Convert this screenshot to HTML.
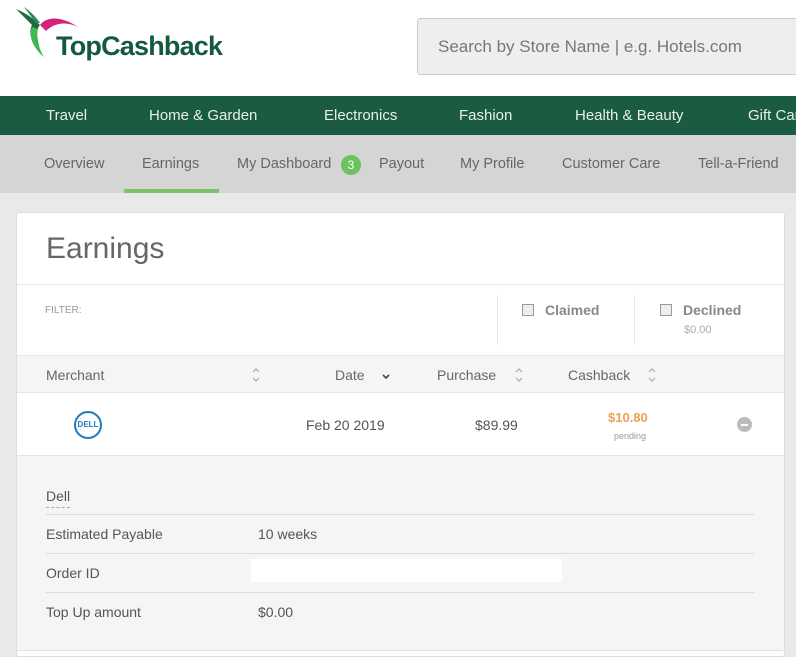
<!DOCTYPE html>
<html><head><meta charset="utf-8"><style>
*{margin:0;padding:0;box-sizing:border-box}
body{width:796px;height:655px;overflow:hidden;background:#e9e9e9;font-family:"Liberation Sans",sans-serif;color:#555;position:relative}
.a{position:absolute;white-space:nowrap}
</style></head><body>
<div class="a" style="left:0;top:0;width:796px;height:96px;background:#fff"></div>
<svg class="a" style="left:14px;top:3px" width="70" height="60" viewBox="0 0 70 60">
<path d="M2 6 C12 10 20 16 26 22 C22 26 22 36 28 52 C18 42 14 30 18 22 Z" fill="#1e6b47"/>
<path d="M18 24 C14 34 20 46 30 54 C22 40 22 32 24 26 Z" fill="#3dbb4e"/>
<path d="M26 22 C32 14 46 12 64 24 C52 18 40 20 32 28 Z" fill="#d6227a"/>
<path d="M10 4 C16 8 22 14 26 20 L22 20 Z" fill="#2a8a55"/>
</svg>
<div class="a" style="left:56px;top:31px;font-size:27px;font-weight:bold;color:#155a3c;letter-spacing:-0.8px">TopCashback</div>
<div class="a" style="left:417px;top:18px;width:390px;height:57px;background:#eee;border:1px solid #ccc;border-radius:3px;font-size:17px;color:#777;padding:18px 0 0 20px">Search by Store Name | e.g. Hotels.com</div>
<div class="a" style="left:0;top:96px;width:796px;height:39px;background:#1b5b42"></div>
<div class="a" style="top:107px;left:46px;font-size:15px;color:#e8efe9">Travel</div>
<div class="a" style="top:107px;left:149px;font-size:15px;color:#e8efe9">Home &amp; Garden</div>
<div class="a" style="top:107px;left:324px;font-size:15px;color:#e8efe9">Electronics</div>
<div class="a" style="top:107px;left:459px;font-size:15px;color:#e8efe9">Fashion</div>
<div class="a" style="top:107px;left:575px;font-size:15px;color:#e8efe9">Health &amp; Beauty</div>
<div class="a" style="top:107px;left:748px;font-size:15px;color:#e8efe9">Gift Cards</div>
<div class="a" style="left:0;top:135px;width:796px;height:58px;background:#d5d5d5"></div>
<div class="a" style="top:156px;left:44px;font-size:14.5px;color:#666">Overview</div>
<div class="a" style="top:156px;left:142px;font-size:14.5px;color:#666">Earnings</div>
<div class="a" style="left:124px;top:189px;width:95px;height:4px;background:#7dc36b"></div>
<div class="a" style="top:156px;left:237px;font-size:14.5px;color:#666">My Dashboard</div>
<div class="a" style="top:155px;left:341px;width:20px;height:20px;border-radius:50%;background:#6cc25e;color:#fff;font-size:12px;text-align:center;line-height:20px">3</div>
<div class="a" style="top:156px;left:379px;font-size:14.5px;color:#666">Payout</div>
<div class="a" style="top:156px;left:460px;font-size:14.5px;color:#666">My Profile</div>
<div class="a" style="top:156px;left:562px;font-size:14.5px;color:#666">Customer Care</div>
<div class="a" style="top:156px;left:698px;font-size:14.5px;color:#666">Tell-a-Friend</div>

<div class="a" style="left:16px;top:212px;width:769px;height:445px;background:#fff;border:1px solid #ddd;border-radius:3px"></div>
<div class="a" style="left:46px;top:232px;font-size:30px;color:#666">Earnings</div>
<div class="a" style="left:17px;top:284px;width:767px;height:1px;background:#e6e6e6"></div>
<div class="a" style="left:45px;top:305px;font-size:10px;color:#999">FILTER:</div>
<div class="a" style="left:497px;top:295px;width:1px;height:50px;background:#e6e6e6"></div>
<div class="a" style="left:634px;top:295px;width:1px;height:50px;background:#e6e6e6"></div>
<div class="a" style="left:522px;top:304px;width:12px;height:12px;border:1px solid #999;background:#eee"></div>
<div class="a" style="left:545px;top:302px;font-size:14px;font-weight:bold;color:#888">Claimed</div>
<div class="a" style="left:660px;top:304px;width:12px;height:12px;border:1px solid #999;background:#eee"></div>
<div class="a" style="left:683px;top:302px;font-size:14px;font-weight:bold;color:#888">Declined</div>
<div class="a" style="left:684px;top:324px;font-size:11px;color:#aaa">$0.00</div>
<div class="a" style="left:17px;top:355px;width:767px;height:38px;background:#f5f5f5;border-top:1px solid #e6e6e6;border-bottom:1px solid #e6e6e6"></div>
<div class="a" style="left:46px;top:367px;font-size:14px;color:#666">Merchant</div>
<svg class="a" style="left:251px;top:367px" width="10" height="16"><path d="M2 5 L5 2 L8 5 M2 11 L5 14 L8 11" stroke="#aaa" fill="none" stroke-width="1.2"/></svg>
<div class="a" style="left:335px;top:367px;font-size:14px;color:#666">Date</div>
<svg class="a" style="left:381px;top:373px" width="10" height="8"><path d="M2 2 L5 5 L8 2" stroke="#444" fill="none" stroke-width="1.6"/></svg>
<div class="a" style="left:437px;top:367px;font-size:14px;color:#666">Purchase</div>
<svg class="a" style="left:514px;top:367px" width="10" height="16"><path d="M2 5 L5 2 L8 5 M2 11 L5 14 L8 11" stroke="#aaa" fill="none" stroke-width="1.2"/></svg>
<div class="a" style="left:568px;top:367px;font-size:14px;color:#666">Cashback</div>
<svg class="a" style="left:647px;top:367px" width="10" height="16"><path d="M2 5 L5 2 L8 5 M2 11 L5 14 L8 11" stroke="#aaa" fill="none" stroke-width="1.2"/></svg>
<div class="a" style="left:74px;top:411px;width:28px;height:28px;border:2px solid #1a7bbf;border-radius:50%;font-size:8px;font-weight:bold;color:#1a7bbf;text-align:center;line-height:24px">DELL</div>
<div class="a" style="left:306px;top:417px;font-size:14px;color:#555">Feb 20 2019</div>
<div class="a" style="left:475px;top:417px;font-size:14px;color:#555">$89.99</div>
<div class="a" style="left:608px;top:410px;font-size:13px;font-weight:bold;color:#f0a050">$10.80</div>
<div class="a" style="left:614px;top:431px;font-size:9px;color:#999">pending</div>
<div class="a" style="left:737px;top:417px;width:15px;height:15px;border-radius:50%;background:#bbb"><div style="margin:7px 4px;height:1.5px;background:#fff"></div></div>
<div class="a" style="left:17px;top:455px;width:767px;height:196px;background:#f5f5f5;border-top:1px solid #e2e2e2;border-bottom:1px solid #e2e2e2"></div>
<div class="a" style="left:46px;top:488px;font-size:14px;color:#555;border-bottom:1px dashed #aaa;padding-bottom:3px">Dell</div>
<div class="a" style="left:46px;top:514px;width:708px;height:1px;background:#ddd"></div>
<div class="a" style="left:46px;top:526px;font-size:14px;color:#555">Estimated Payable</div>
<div class="a" style="left:258px;top:526px;font-size:14px;color:#555">10 weeks</div>
<div class="a" style="left:46px;top:553px;width:708px;height:1px;background:#ddd"></div>
<div class="a" style="left:46px;top:565px;font-size:14px;color:#555">Order ID</div>
<div class="a" style="left:251px;top:559px;width:311px;height:23px;background:#fff"></div>
<div class="a" style="left:46px;top:592px;width:708px;height:1px;background:#ddd"></div>
<div class="a" style="left:46px;top:604px;font-size:14px;color:#555">Top Up amount</div>
<div class="a" style="left:258px;top:604px;font-size:14px;color:#555">$0.00</div>
</body></html>
